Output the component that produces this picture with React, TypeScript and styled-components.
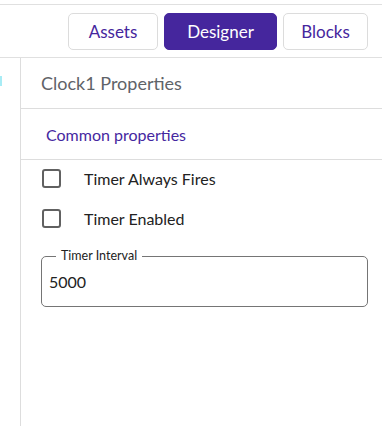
import styled, { createGlobalStyle } from 'styled-components';

const GlobalStyle = createGlobalStyle`
  html, body {
    margin: 0;
    padding: 0;
    background: #ffffff;
  }
  body {
    font-family: Lato, "Noto Sans", sans-serif;
  }
`;

const Page = styled.div`
  display: flex;
  flex-direction: column;
  height: 426px;
  overflow: hidden;
`;

const Toolbar = styled.div`
  display: flex;
  justify-content: flex-end;
  align-items: center;
  gap: 6px;
  margin-top: 4px;
  height: 54px;
  padding-right: 14px;
  border-top: 1px solid #e0e0e0;
  border-bottom: 1px solid #e0e0e0;
  box-sizing: border-box;
`;

const ModeButton = styled.button<{ $active?: boolean; $width: number }>`
  width: ${(p) => p.$width}px;
  height: 37px;
  padding: 0;
  border-radius: 5px;
  border: 1px solid ${(p) => (p.$active ? '#45269d' : '#dcdcdc')};
  background: ${(p) => (p.$active ? '#45269d' : '#ffffff')};
  color: ${(p) => (p.$active ? '#ffffff' : '#45269d')};
  font-family: Lato, "Noto Sans", sans-serif;
  font-size: 17px;
  cursor: pointer;
`;

const Body = styled.div`
  display: flex;
  flex: 1;
`;

const SideColumn = styled.div`
  position: relative;
  width: 20px;
  border-right: 1px solid #dddddd;
`;

const SideMarker = styled.div`
  position: absolute;
  left: 0;
  top: 18px;
  width: 2px;
  height: 10px;
  background: #a8ecf5;
`;

const Panel = styled.div`
  flex: 1;
  display: flex;
  flex-direction: column;
`;

const PanelHeader = styled.div`
  height: 51px;
  display: flex;
  align-items: center;
  padding-left: 20px;
  border-bottom: 1px solid #dddddd;
  box-sizing: border-box;
  color: #5f6368;
  font-size: 18px;
`;

const SectionTitle = styled.div`
  height: 51px;
  display: flex;
  align-items: center;
  padding-left: 25px;
  border-bottom: 1px solid #dddddd;
  box-sizing: border-box;
  color: #4527a0;
  font-size: 16px;
`;

const Fields = styled.div`
  display: flex;
  flex-direction: column;
  gap: 20px;
  padding: 8px 14px 0 20px;
`;

const CheckRow = styled.label`
  display: flex;
  align-items: center;
  gap: 23px;
  height: 20px;
  padding-left: 1px;
  color: #222222;
  font-size: 16px;
`;

const CheckBox = styled.span`
  width: 19px;
  height: 19px;
  box-sizing: border-box;
  border: 2px solid #616161;
  border-radius: 3px;
`;

const OutlinedField = styled.fieldset`
  margin: 2px 0 0;
  padding: 0 7px;
  height: 57px;
  box-sizing: border-box;
  border: 1px solid #757575;
  border-radius: 5px;
`;

const FieldLegend = styled.legend`
  padding: 0 5px;
  margin-left: 7px;
  color: #222222;
  font-size: 12.5px;
  line-height: 12px;
`;

const FieldValue = styled.div`
  color: #222222;
  font-size: 16px;
  padding-top: 10px;
`;

const modes = [
  { label: 'Assets', width: 90 },
  { label: 'Designer', width: 113, active: true },
  { label: 'Blocks', width: 85 },
];

const checks = ['Timer Always Fires', 'Timer Enabled'];

export default function App() {
  return (
    <>
      <GlobalStyle />
      <Page>
        <Toolbar>
          {modes.map((m) => (
            <ModeButton key={m.label} $width={m.width} $active={m.active}>
              {m.label}
            </ModeButton>
          ))}
        </Toolbar>
        <Body>
          <SideColumn>
            <SideMarker />
          </SideColumn>
          <Panel>
            <PanelHeader>Clock1 Properties</PanelHeader>
            <SectionTitle>Common properties</SectionTitle>
            <Fields>
              {checks.map((c) => (
                <CheckRow key={c}>
                  <CheckBox />
                  {c}
                </CheckRow>
              ))}
              <OutlinedField>
                <FieldLegend>Timer Interval</FieldLegend>
                <FieldValue>5000</FieldValue>
              </OutlinedField>
            </Fields>
          </Panel>
        </Body>
      </Page>
    </>
  );
}
